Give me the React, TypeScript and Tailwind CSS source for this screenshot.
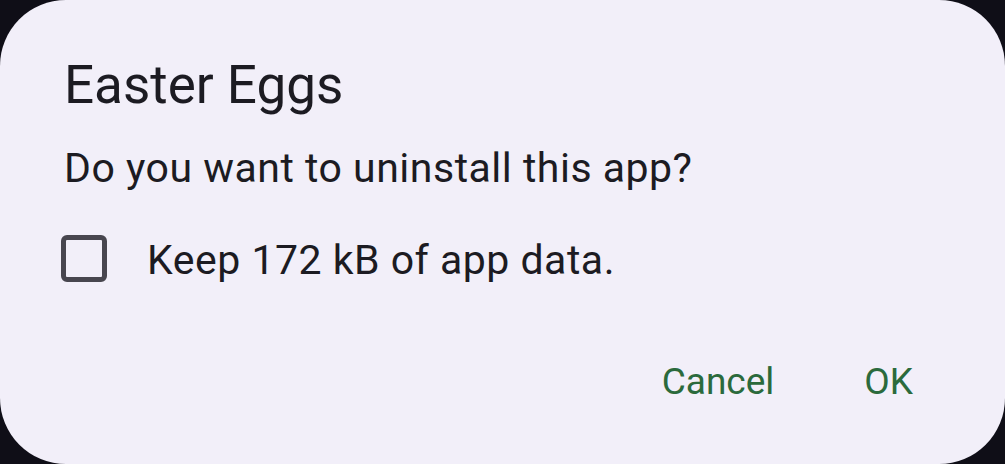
import React from 'react';

const App = () => {
  return (
    <div className="w-[1005px] h-[464px] bg-[#0f0e17] overflow-hidden" style={{ fontFamily: 'Roboto, "Noto Sans", sans-serif' }}>
      <div className="w-full h-full bg-[#f2eff9] rounded-[66px] flex flex-col pl-[64px] pr-[92px] pt-[53px]">
        <h1 className="text-[53px] leading-[64px] text-[#1c1b22] font-normal">Easter Eggs</h1>
        <p className="mt-[27px] text-[41px] leading-[48px] tracking-[0.5px] text-[#1c1b22]">Do you want to uninstall this app?</p>
        <label className="mt-[42px] flex items-center h-[48px]">
          <span className="w-[46px] h-[47px] ml-[-3px] border-[5px] border-[#48464f] rounded-[6px] shrink-0" />
          <span className="ml-[40px] mt-[3px] text-[41px] leading-[48px] tracking-[0.5px] text-[#1c1b22]">Keep 172 kB of app data.</span>
        </label>
        <div className="mt-[76px] flex justify-end items-center gap-[90px] text-[37px] leading-[48px] text-[#2b6a3c]">
          <button>Cancel</button>
          <button>OK</button>
        </div>
      </div>
    </div>
  );
};

export default App;
